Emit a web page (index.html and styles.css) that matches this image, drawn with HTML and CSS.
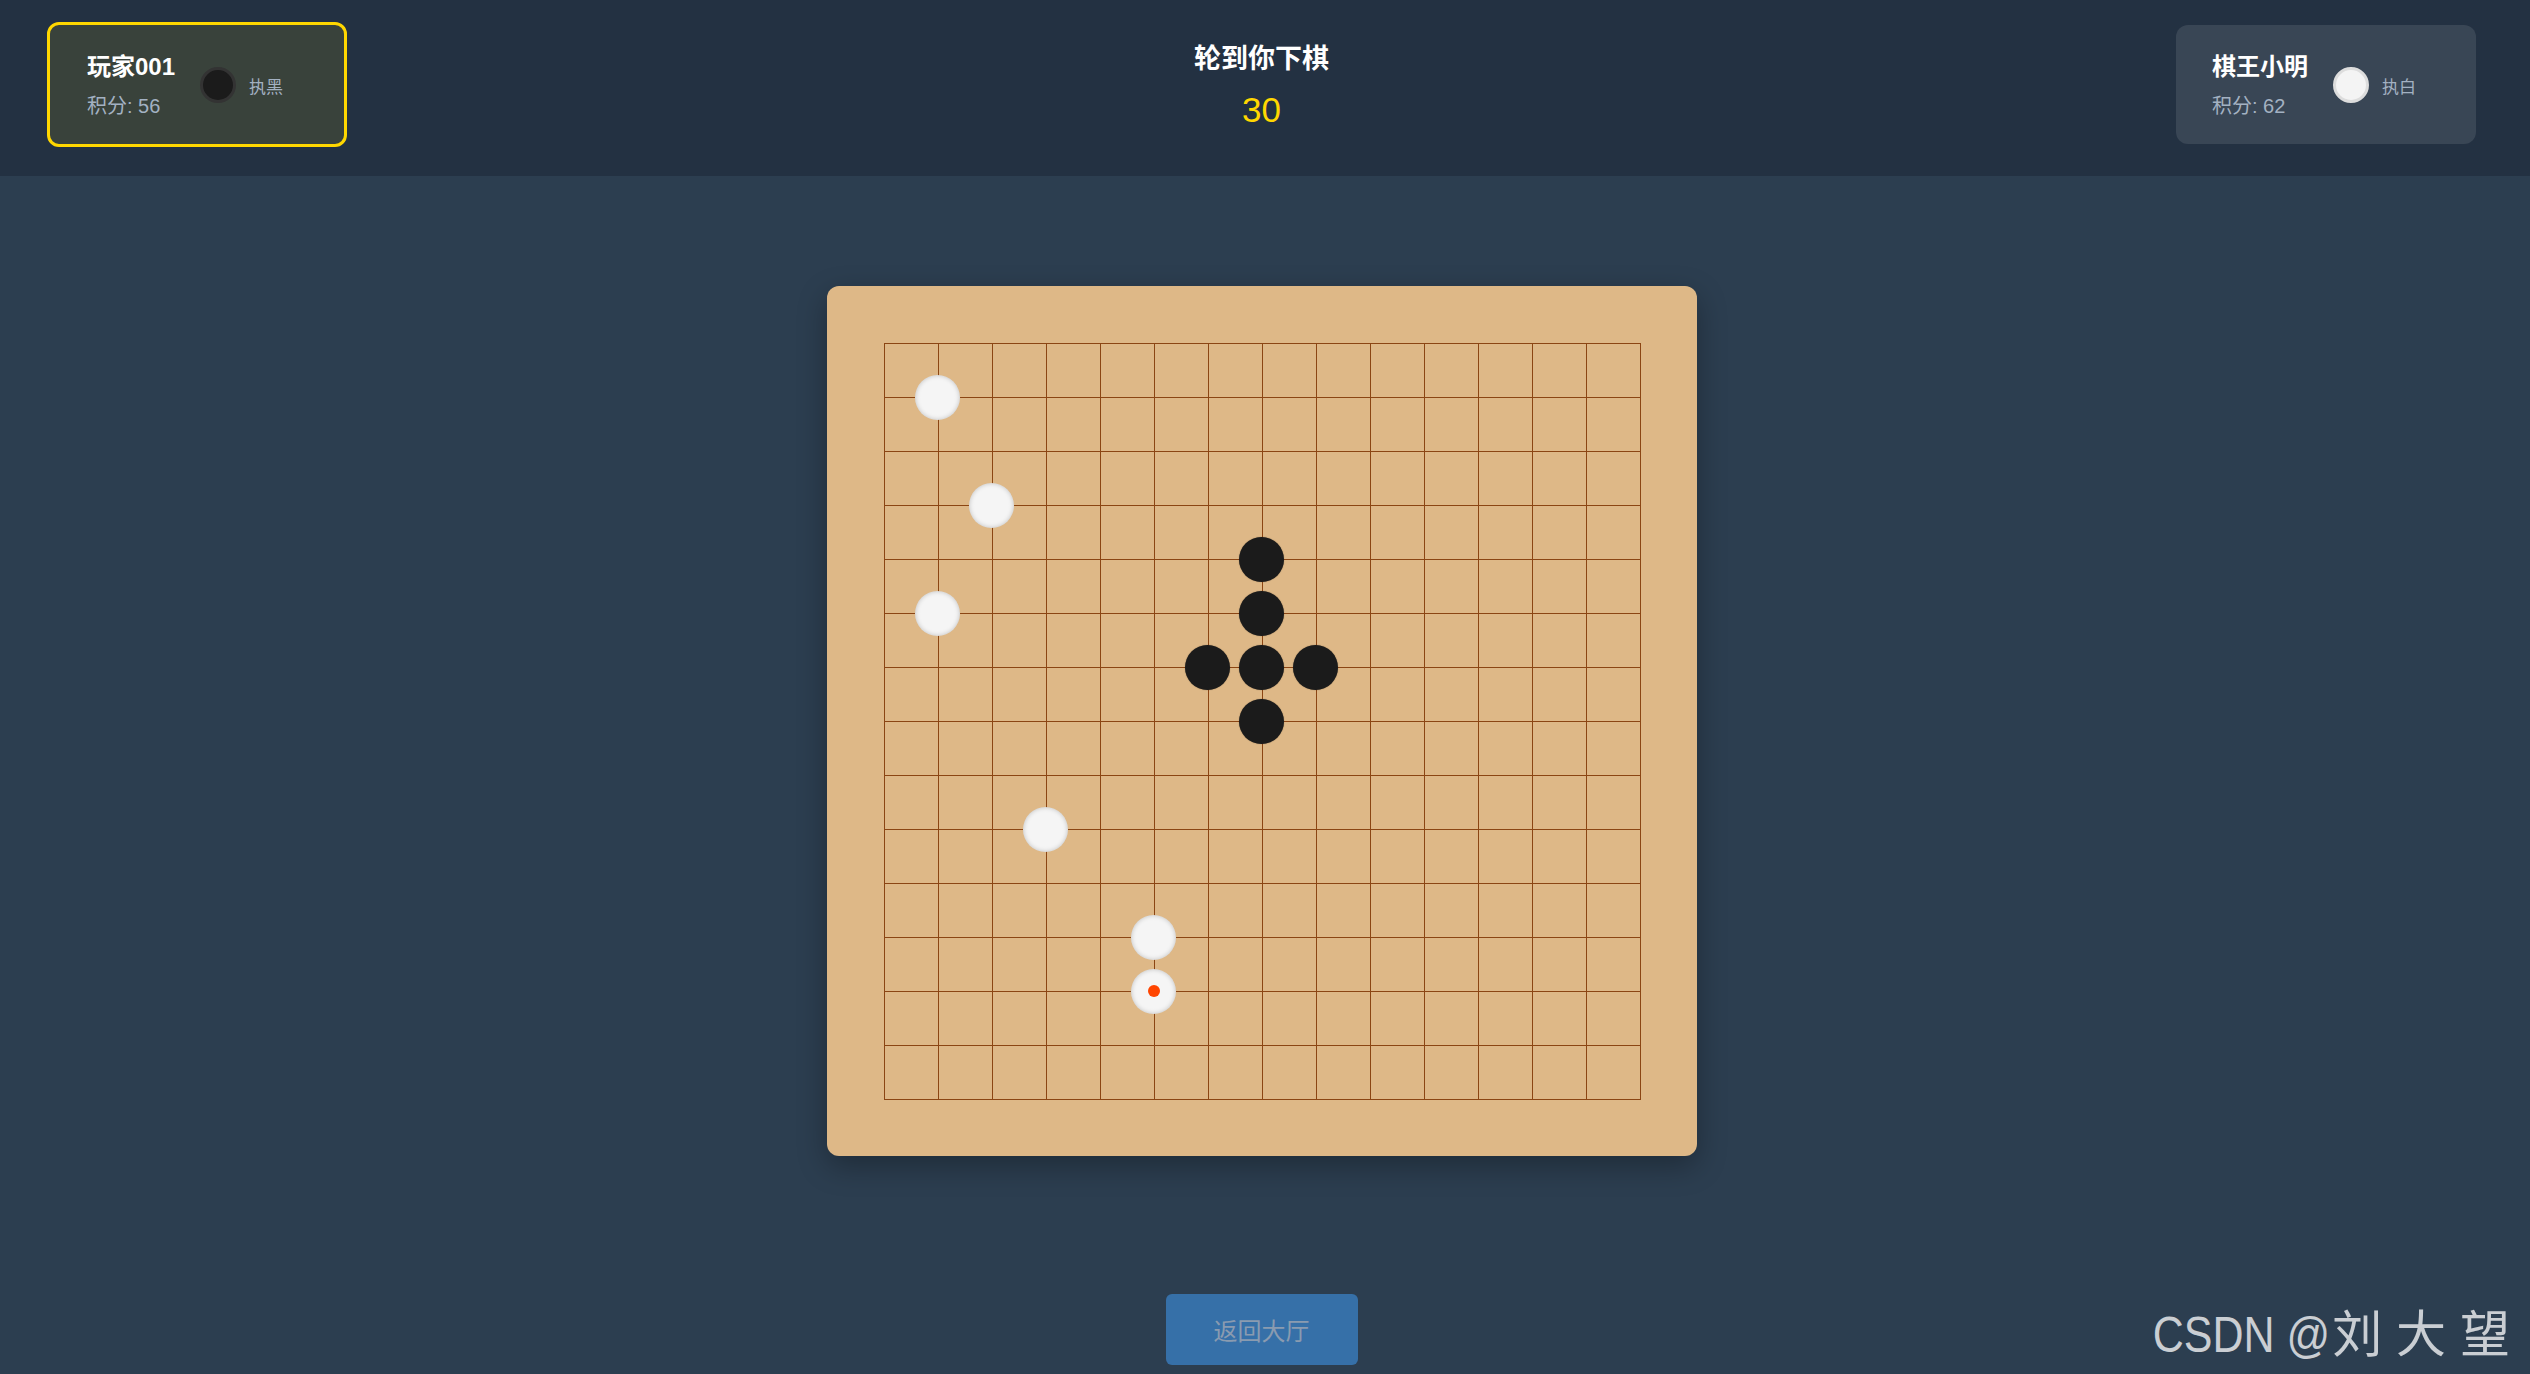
FILE: index.html
```html
<!DOCTYPE html>
<html>
  <head>
    <title>五子棋对战</title>
    <link rel="stylesheet" href="styles.css">
  </head>
  <body>
    <div class="header">
      <div class="player-card active">
        <div class="player-info">
          <div class="player-name">玩家001</div>
          <div class="player-score">积分: 56</div>
        </div>
        <div class="player-piece">
          <span class="piece-icon black"></span>
          <span class="piece-label">执黑</span>
        </div>
      </div>

      <div class="turn-box">
        <div class="turn-text">轮到你下棋</div>
        <div class="turn-timer">30</div>
      </div>

      <div class="player-card">
        <div class="player-info">
          <div class="player-name">棋王小明</div>
          <div class="player-score">积分: 62</div>
        </div>
        <div class="player-piece">
          <span class="piece-icon white"></span>
          <span class="piece-label">执白</span>
        </div>
      </div>
    </div>

    <div class="main">
      <div class="board">
        <div class="grid">
          <div class="stones">
            <div class="stone white" style="grid-column: 2; grid-row: 2"></div>
            <div class="stone white" style="grid-column: 3; grid-row: 4"></div>
            <div class="stone white" style="grid-column: 2; grid-row: 6"></div>
            <div class="stone black" style="grid-column: 8; grid-row: 5"></div>
            <div class="stone black" style="grid-column: 8; grid-row: 6"></div>
            <div class="stone black" style="grid-column: 7; grid-row: 7"></div>
            <div class="stone black" style="grid-column: 8; grid-row: 7"></div>
            <div class="stone black" style="grid-column: 9; grid-row: 7"></div>
            <div class="stone black" style="grid-column: 8; grid-row: 8"></div>
            <div class="stone white" style="grid-column: 4; grid-row: 10"></div>
            <div class="stone white" style="grid-column: 6; grid-row: 12"></div>
            <div class="stone white last" style="grid-column: 6; grid-row: 13"></div>
          </div>
        </div>
      </div>

      <button class="back-btn" disabled>返回大厅</button>
    </div>

    <div class="watermark"><span class="wm-latin">CSDN @</span>刘 大 望</div>
  </body>
</html>
```

FILE: styles.css
```css
body {
    margin: 0;
    background: #2c3e50;
    font-family: "Liberation Sans", "Noto Sans CJK SC", sans-serif;
    color: #fff;
    overflow: hidden;
}
/* top bar with both players */
.header {
    display: flex;
    justify-content: space-between;
    align-items: center;
    height: 169px;
    padding: 0 54px 7px 47px;
    background: #233142;
}
.player-card {
    width: 300px;
    box-sizing: border-box;
    display: flex;
    align-items: center;
    gap: 25px;
    padding: 27px 36px 26px;
    border-radius: 12px;
    background: rgba(255, 255, 255, 0.1);
}
.player-card.active {
    border: 3px solid #ffd700;
    padding: 27px 33px 26px 37px;
    background: rgba(255, 215, 0, 0.1);
}
.player-name {
    font-size: 24px;
    font-weight: bold;
    line-height: 29px;
}
.player-score {
    margin-top: 13px;
    font-size: 20px;
    line-height: 24px;
    color: #a3b1c2;
}
.player-piece {
    display: flex;
    align-items: center;
    gap: 13px;
}
.piece-icon {
    width: 30px;
    height: 30px;
    border-radius: 50%;
    border: 3px solid #333;
    background: #1b1b1b;
}
.piece-icon.white {
    border-color: #ddd;
    background: #f4f4f4;
}
.piece-label {
    font-size: 17px;
    color: #a3b1c2;
}
.turn-box {
    display: flex;
    flex-direction: column;
    align-items: center;
    gap: 14px;
    padding-top: 5px;
}
.turn-text {
    font-size: 27px;
    font-weight: bold;
    line-height: 32px;
}
.turn-timer {
    font-size: 35px;
    line-height: 42px;
    color: #ffd700;
}
/* board area */
.main {
    display: flex;
    flex-direction: column;
    align-items: center;
    padding-right: 7px;
}
.board {
    margin-top: 110px;
    padding: 57px 56px 56px 57px;
    background: #deb887;
    border-radius: 12px;
    box-shadow: 0 10px 30px rgba(0, 0, 0, 0.3);
}
.grid {
    position: relative;
    width: 756px;
    height: 756px;
    border-right: 1px solid #8b4513;
    border-bottom: 1px solid #8b4513;
    background-image:
        linear-gradient(to right, #8b4513 1px, transparent 1px),
        linear-gradient(to bottom, #8b4513 1px, transparent 1px);
    background-size: 54px 54px;
}
.stones {
    position: absolute;
    left: -27px;
    top: -27px;
    display: grid;
    grid-template-columns: repeat(15, 54px);
    grid-template-rows: repeat(15, 54px);
}
.stone {
    width: 45px;
    height: 45px;
    border-radius: 50%;
    place-self: center;
    position: relative;
}
.stone.black {
    background: #1b1b1b;
    box-shadow: 0 0 1px rgba(0, 0, 0, 0.5);
}
.stone.white {
    background: #f5f5f5;
    box-shadow: inset 0 0 5px rgba(0, 0, 0, 0.22);
}
.stone.last::after {
    content: "";
    position: absolute;
    left: 50%;
    top: 50%;
    width: 12px;
    height: 12px;
    margin: -6px 0 0 -6px;
    border-radius: 50%;
    background: #ff4500;
}
.back-btn {
    margin-top: 138px;
    width: 192px;
    height: 71px;
    border: none;
    border-radius: 6px;
    background: #3670a8;
    color: #8a9bb0;
    font-family: inherit;
    font-size: 24px;
}
.watermark {
    position: absolute;
    right: 20px;
    bottom: 8px;
    font-size: 50px;
    color: rgba(255, 255, 255, 0.75);
    white-space: nowrap;
}
.wm-latin {
    display: inline-block;
    font-size: 43px;
    transform: scaleY(1.18);
    transform-origin: 50% 85%;
    margin-right: 2px;
}
```
